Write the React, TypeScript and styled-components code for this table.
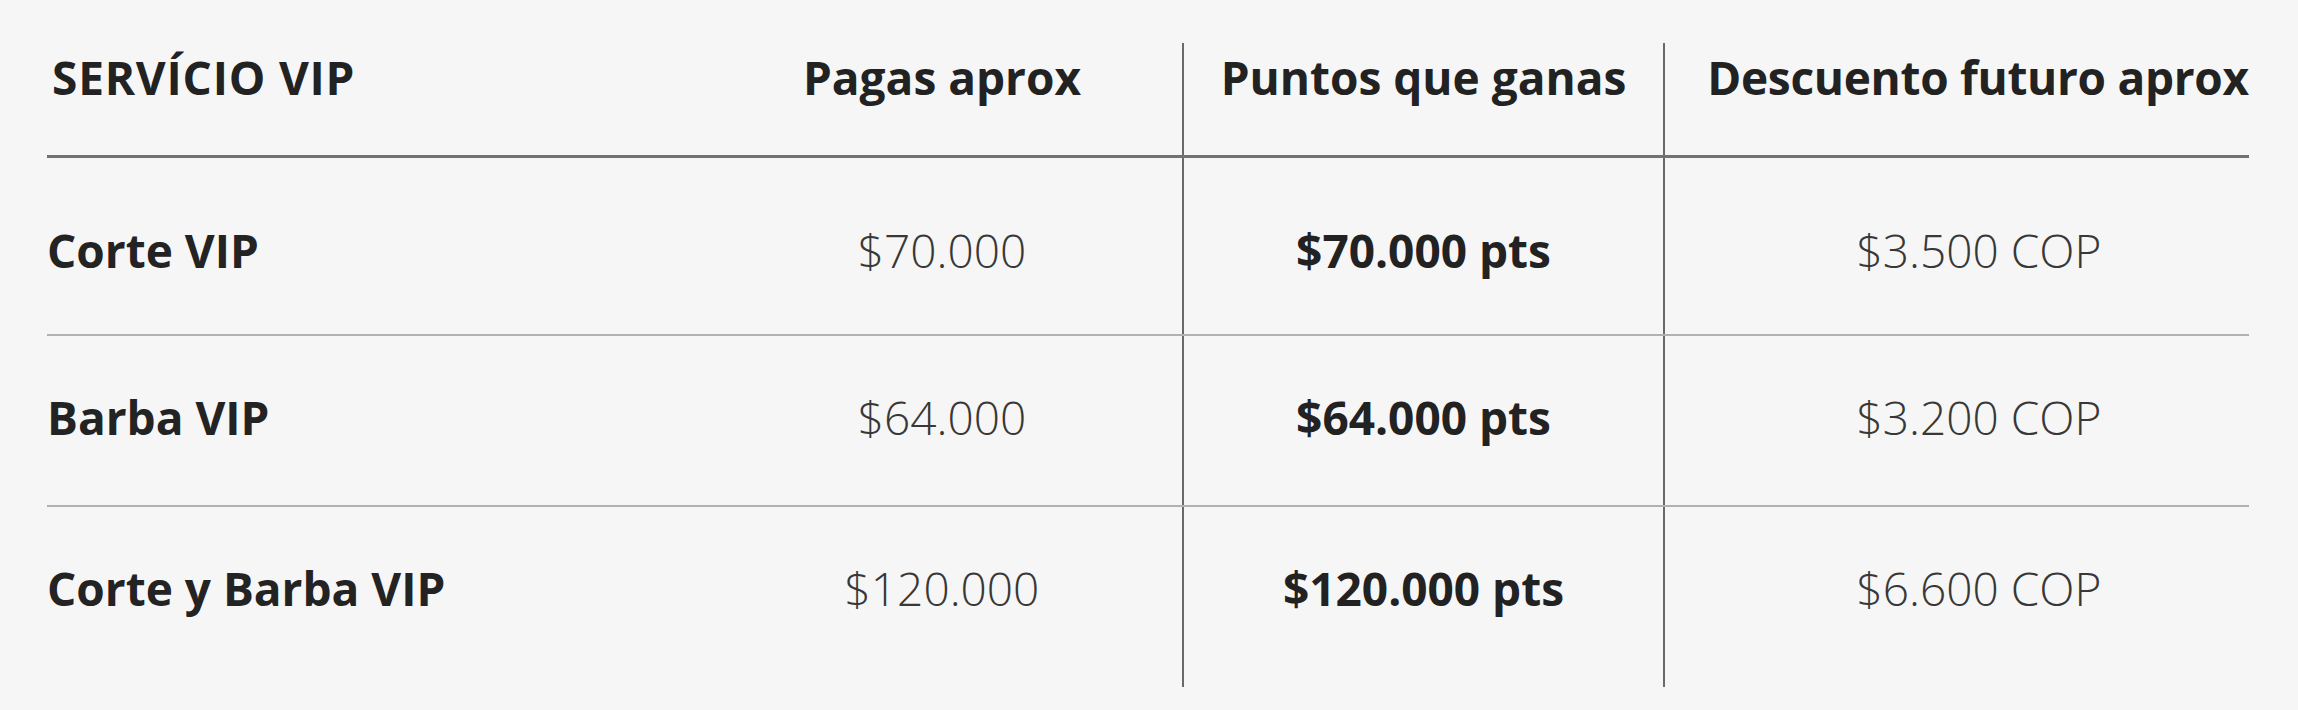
import React from 'react';
import styled, { createGlobalStyle } from 'styled-components';

type Service = {
  name: string,
  price: string,
  points: string,
  discount: string,
};

const services: Service[] = [
  { name: 'Corte VIP', price: '$70.000', points: '$70.000 pts', discount: '$3.500 COP' },
  { name: 'Barba VIP', price: '$64.000', points: '$64.000 pts', discount: '$3.200 COP' },
  { name: 'Corte y Barba VIP', price: '$120.000', points: '$120.000 pts', discount: '$6.600 COP' },
];

const App = () => {
  return (
    <>
      <GlobalStyle />
      <Table>
        <HeaderRow>
          <HeadCell $first>SERVÍCIO VIP</HeadCell>
          <HeadCell>Pagas aprox</HeadCell>
          <HeadCell $divider>Puntos que ganas</HeadCell>
          <HeadCell $divider $last>Descuento futuro aprox</HeadCell>
        </HeaderRow>
        {services.map((service) => (
          <Row key={service.name}>
            <NameCell>{service.name}</NameCell>
            <ValueCell>{service.price}</ValueCell>
            <ValueCell $divider $strong>{service.points}</ValueCell>
            <ValueCell $divider $last>{service.discount}</ValueCell>
          </Row>
        ))}
      </Table>
    </>
  );
};

const GlobalStyle = createGlobalStyle`
  html, body {
    margin: 0;
    padding: 0;
    background: #f6f6f6;
  }
  body {
    font-family: "Open Sans", "Liberation Sans", Arial, sans-serif;
    color: #222;
  }
`;

const Table = styled.div`
  width: 2202px;
  margin: 43px 0 0 47px;
`;

const columns = '655px 480px 481px 586px';

const HeaderRow = styled.div`
  display: grid;
  grid-template-columns: ${columns};
  height: 112px;
  border-bottom: 3px solid #727272;
`;

const HeadCell = styled.div<{ $first?: boolean, $divider?: boolean, $last?: boolean }>`
  font-size: 46px;
  font-weight: 700;
  line-height: 55px;
  color: #222;
  white-space: nowrap;
  padding-top: 7px;
  text-align: ${(p) => (p.$first ? 'left' : 'center')};
  letter-spacing: ${(p) => (p.$first ? '0.8px' : p.$last ? '-0.3px' : '0')};
  padding-left: ${(p) => (p.$first ? '5px' : p.$last ? '42px' : '0')};
  border-left: ${(p) => (p.$divider ? '2px solid #6a6a6a' : 'none')};
`;

// rows are not all the same height in the design
const Row = styled.div`
  --pad: 54px;
  display: grid;
  grid-template-columns: ${columns};
  box-sizing: border-box;
  height: 171px;
  border-bottom: 2px solid #b2b2b2;

  &:nth-child(2) {
    --pad: 65px;
    height: 178px;
  }

  &:last-child {
    --pad: 54px;
    height: 180px;
    border-bottom: none;
  }
`;

const NameCell = styled.div`
  display: flex;
  align-items: flex-start;
  padding-top: var(--pad);
  font-size: 46px;
  font-weight: 700;
  line-height: 55px;
  color: #232323;
  white-space: nowrap;
`;

const ValueCell = styled.div<{ $divider?: boolean, $strong?: boolean, $last?: boolean }>`
  display: flex;
  align-items: flex-start;
  justify-content: center;
  padding-top: var(--pad);
  font-size: 46px;
  font-weight: ${(p) => (p.$strong ? 700 : 300)};
  line-height: 55px;
  color: ${(p) => (p.$strong ? '#222' : '#383838')};
  white-space: nowrap;
  padding-left: ${(p) => (p.$last ? '44px' : '0')};
  border-left: ${(p) => (p.$divider ? '2px solid #6a6a6a' : 'none')};
`;

export default App;
